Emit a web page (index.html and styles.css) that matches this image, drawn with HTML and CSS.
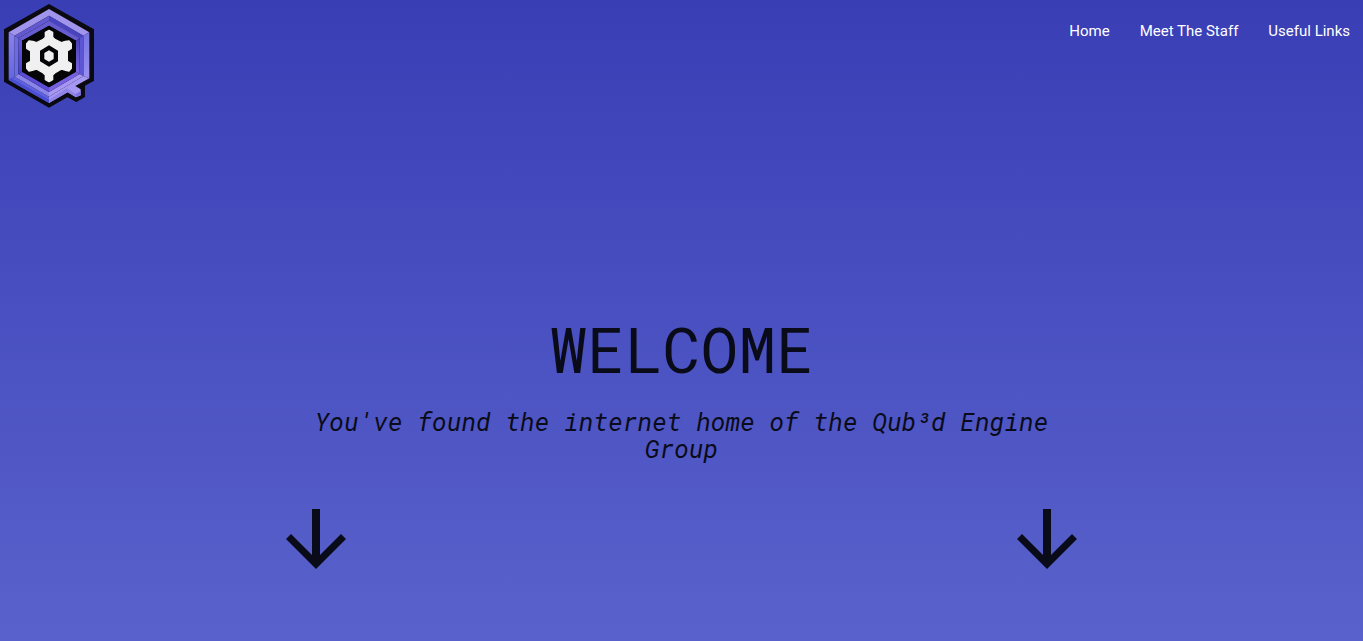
FILE: index.html
```html
<!DOCTYPE html>
<html lang="en">
<head>
<meta charset="utf-8">
<title>Qub³d Engine Group</title>
<link rel="stylesheet" href="styles.css">
</head>
<body>
<header class="topbar">
  <a class="brand" href="#" aria-label="Qub³d Engine Group">
    <svg class="logo" viewBox="12 12 270 312" aria-hidden="true">
      <defs>
        <linearGradient id="left" x1="0" y1="0" x2="0" y2="1"><stop offset="0" stop-color="#8b82f2"/><stop offset="1" stop-color="#6265e2"/></linearGradient>
        <linearGradient id="right" x1="0" y1="0" x2="0" y2="1"><stop offset="0" stop-color="#7773e2"/><stop offset="1" stop-color="#9b90f1"/></linearGradient>
        <linearGradient id="wall" x1="0" y1="0" x2="0" y2="1"><stop offset="0" stop-color="#4a3db8"/><stop offset="1" stop-color="#7a66e4"/></linearGradient>
        <linearGradient id="leftwall" x1="0" y1="0" x2="0" y2="1"><stop offset="0" stop-color="#6659d9"/><stop offset="1" stop-color="#4542c9"/></linearGradient>
      </defs>
      <path fill="#0a0a10" d="M147 12 282 88V242L255 257V291L229 306 202 292 147 323 12 245V88Z"/>
      <path fill="#a094ec" d="M147 27 268 97 250 107 147 47 44 107 26 97Z"/>
      <path fill="url(#left)" d="M26 97 44 107V230L26 240Z"/>
      <path fill="url(#right)" d="M268 97V235L250 228V107Z"/>
      <path fill="#5f60de" d="M26 240 44 230 147 290V309Z"/>
      <path fill="#4a4ed3" d="M26 240 35 235 147 299V309Z"/>
      <path fill="#a598f3" d="M147 290 250 228 268 235 226 258 242 268V286L228 292 203 277 147 309Z"/>
      <path fill="#8f82e9" d="M200 265 228 281V292L203 277 147 309V299Z"/>
      <path fill="#7c72e6" d="M228 281 242 273V286L228 292Z"/>
      <path fill="#6258cf" d="M147 47 250 107 239 115 147 62 55 115 44 107Z"/>
      <path fill="#4844bd" d="M147 47 250 107 239 115 147 62Z"/>
      <path fill="#6c6ce2" d="M44 107 55 115V222L44 230Z"/>
      <path fill="#5b56d3" d="M250 107V228L239 222V115Z"/>
      <path fill="#8a85eb" d="M44 230 55 222 147 276V290Z"/>
      <path fill="#a796f4" d="M147 276 239 222 250 228 147 290Z"/>
      <path fill="#665bd0" d="M147 62 239 115 228 122 147 77 66 122 55 115Z"/>
      <path fill="url(#leftwall)" d="M55 115 66 122V215L55 222Z"/>
      <path fill="url(#wall)" d="M239 115V222L228 215V122Z"/>
      <path fill="#5b4cd3" d="M55 222 66 215 147 262V276Z"/>
      <path fill="#7560df" d="M147 276V262L228 215 239 222Z"/>
      <path fill="#050507" d="M147 77 228 122V215L147 262 66 215V122Z"/>
      <path fill="#f0f0f0" stroke="#f0f0f0" stroke-width="4" stroke-linejoin="round" d="M147 91 158 97V112L166 119 184 128 196 124 207 123 214 131V145L202 153V184L214 191V205L207 213 197 211 185 207 167 217 158 225V239L147 245 136 239V225L127 217 109 207 97 211 87 213 80 205V191L92 184V153L80 145V131L87 123 98 124 110 128 128 119 136 112V97Z"/>
      <path fill="#050507" d="M147 136 174 152V184L147 200 120 184V152Z"/>
      <path fill="#f0f0f0" d="M147 151 161 159V177L147 185 133 177V159Z"/>
    </svg>
  </a>
  <nav class="nav">
    <a class="nav-link" href="#">Home</a>
    <a class="nav-link" href="#staff">Meet The Staff</a>
    <a class="nav-link" href="#links">Useful Links</a>
  </nav>
</header>
<main class="hero">
  <h1 class="title">WELCOME</h1>
  <p class="tagline">You've found the internet home of the Qub³d Engine Group</p>
  <div class="arrows">
    <svg class="arrow" viewBox="0 0 60 60" aria-hidden="true"><path d="M26 0h8v46l21-21 5 5-30 30L0 30l5-5 21 21Z"/></svg>
    <svg class="arrow" viewBox="0 0 60 60" aria-hidden="true"><path d="M26 0h8v46l21-21 5 5-30 30L0 30l5-5 21 21Z"/></svg>
  </div>
</main>
</body>
</html>
```
FILE: styles.css
```css
* {
  box-sizing: border-box;
}

body {
  margin: 0;
  min-height: 100vh;
  background: linear-gradient(#3a3eb5, #5962cc);
  color: #0a0b18;
  font-family: Roboto, sans-serif;
}

.topbar {
  display: flex;
  justify-content: space-between;
  align-items: flex-start;
  padding: 4px 13px 0 4px;
}

.brand,
.logo {
  display: block;
}

.logo {
  width: 90px;
  height: 104px;
}

.nav {
  display: flex;
  gap: 30px;
  padding-top: 16px;
}

.nav-link {
  color: #fff;
  font-size: 15px;
  line-height: 22px;
  text-decoration: none;
}

.hero {
  width: 58%;
  margin: 0 auto;
  padding-top: 206px;
  font-family: "Roboto Mono", "DejaVu Sans Mono", monospace;
  text-align: center;
}

.title {
  margin: 0;
  font-size: 63px;
  font-weight: 400;
  line-height: 70px;
}

.tagline {
  margin: 24px 0 0;
  font-size: 25px;
  font-style: italic;
  line-height: 27px;
}

.arrows {
  display: flex;
  justify-content: space-between;
  padding-top: 47px;
}

.arrow {
  width: 60px;
  height: 60px;
  fill: #0a0b18;
}
```
